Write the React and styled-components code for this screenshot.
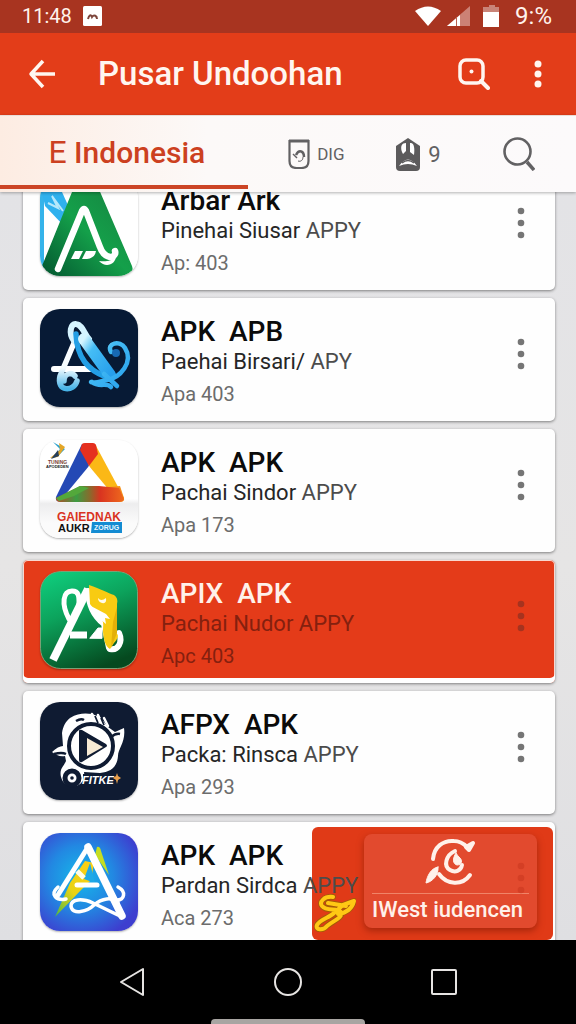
import React, { useLayoutEffect, useRef } from "react";
import styled, { createGlobalStyle } from "styled-components";

const GlobalStyle = createGlobalStyle`
  * {
    box-sizing: border-box;
  }
  body {
    margin: 0;
    font-family: Roboto, "Liberation Sans", sans-serif;
    background: #e3e2e4;
  }
  button {
    border: 0;
    padding: 0;
    background: none;
    font: inherit;
    color: inherit;
    cursor: pointer;
  }
  svg {
    display: block;
  }
`;

const Screen = styled.div`
  display: flex;
  flex-direction: column;
  height: 100vh;
`;

const StatusBar = styled.div`
  flex: none;
  display: flex;
  align-items: center;
  height: 33px;
  padding: 0 24px 2px 22px;
  background: #a83420;
  color: #fff3ec;
  font-size: 20px;
  line-height: 28px;
`;

const StatusNote = styled.div`
  flex: 1;
  padding-left: 8px;
`;

const StatusIcons = styled.div`
  display: flex;
  align-items: center;
  gap: 6px;
  padding-right: 11px;
`;

const Battery = styled.span`
  font-size: 24px;
`;

const AppBar = styled.header`
  flex: none;
  display: flex;
  align-items: center;
  height: 82px;
  padding: 0 14px 0 18px;
  background: #e33d19;
  color: #fff6f0;

  > h1 {
    flex: 1;
    margin: 0;
    padding-left: 32px;
    font-size: 33px;
    line-height: 40px;
    font-weight: 500;
    white-space: nowrap;
  }
`;

const IconButton = styled.button`
  display: flex;
  align-items: center;
  justify-content: center;
  width: 48px;
  height: 48px;
`;

const AppActions = styled.div`
  display: flex;
  gap: 16px;
`;

const TabBar = styled.nav`
  flex: none;
  position: relative;
  z-index: 2;
  display: flex;
  height: 77px;
  background: linear-gradient(90deg, #fdece2, #fcf9f8 36%, #fcfafb);
  border-top: 1px solid #e8ddd8;
  box-shadow: 0 1px 3px rgba(0, 0, 0, 0.3);
  color: #626163;
`;

const ActiveTab = styled.button`
  width: 43%;
  margin-bottom: 3px;
  padding: 4px 0 0 6px;
  border-bottom: 4px solid #cc4526;
  color: #cc4020;
  font-size: 30px;
  line-height: 36px;
  font-weight: 500;

  > span {
    font-size: 32px;
    font-weight: 400;
  }
`;

const TabGroup = styled.div`
  flex: 1;
  display: grid;
  grid-template-columns: repeat(3, 1fr);
  padding: 0 6px 0 18px;
`;

const Tab = styled.button`
  display: flex;
  align-items: center;
  justify-content: center;
  gap: 7px;
  font-size: ${(props) => (props.$large ? 22 : 17)}px;
`;

const List = styled.main`
  flex: 1;
  min-height: 0;
  display: flex;
  flex-direction: column;
  gap: 8px;
  padding: 0 21px 0 23px;
  overflow-y: auto;
  scrollbar-width: none;
  background: linear-gradient(#e3e3e6, #e6e5e5 50%, #dfdfe2);
`;

const Card = styled.article`
  flex: none;
  position: relative;
  display: flex;
  align-items: flex-start;
  height: 123px;
  padding: 11px 10px 0 17px;
  border-radius: 5px;
  background: ${(props) => (props.$active ? "#e43b19" : "#fefefe")};
  box-shadow: ${(props) =>
    props.$active
      ? "inset 0 -5px #fff, inset 0 0 0 1px #f8d8d0, 0 1px 3px rgba(0, 0, 0, 0.45)"
      : "0 1px 3px rgba(0, 0, 0, 0.45)"};
`;

const AppIcon = styled.svg`
  flex: none;
  width: 98px;
  height: 98px;
  border-radius: 20px;
  box-shadow: 0 1px 2px rgba(0, 0, 0, 0.3);
`;

const Info = styled.div`
  flex: 1;
  min-width: 0;
  position: relative;
  z-index: 1;
  padding: 7px 0 0 23px;
  white-space: pre;

  > h2 {
    margin: 0;
    font-size: 28px;
    line-height: 32px;
    font-weight: 500;
    color: ${(props) => (props.$active ? "#fff1ea" : "#0b0b0b")};
  }
`;

const Maker = styled.div`
  font-size: 22px;
  line-height: 28px;
  color: ${(props) => (props.$active ? "#84200f" : "#262626")};

  > span {
    color: ${(props) => (props.$active ? "#84200f" : "#4c4c4c")};
  }
`;

const Meta = styled.div`
  font-size: 20px;
  line-height: 36px;
  color: ${(props) => (props.$active ? "#84200f" : "#6c6c6c")};
`;

const MoreButton = styled.button`
  position: relative;
  z-index: 1;
  display: flex;
  align-items: center;
  justify-content: center;
  width: 48px;
  height: 90px;
  color: ${(props) => props.$color || "#757575"};
`;

const Promo = styled.aside`
  position: absolute;
  top: 5px;
  right: 2px;
  display: flex;
  align-items: flex-end;
  gap: 8px;
  height: 113px;
  padding: 0 16px 0 2px;
  border-radius: 6px;
  background: #e03a17;
`;

const PromoMark = styled.svg`
  width: 42px;
  height: 38px;
  margin-bottom: 8px;
`;

const PromoPanel = styled.button`
  display: flex;
  flex-direction: column;
  align-items: center;
  width: 173px;
  margin-bottom: 12px;
  padding: 2px 8px 5px;
  border-radius: 8px;
  background: #e24a2e;
  box-shadow: 0 3px 7px rgba(110, 20, 0, 0.5);
  color: #fff1ea;
`;

const PromoLabel = styled.span`
  width: 100%;
  margin-top: 6px;
  padding-top: 3px;
  border-top: 1px solid #f08468;
  font-size: 22px;
  line-height: 26px;
  font-weight: 500;
  text-align: left;
  white-space: nowrap;
`;

const NavBar = styled.footer`
  flex: none;
  display: flex;
  flex-direction: column;
  align-items: center;
  height: 84px;
  padding-top: 5px;
  background: #000;
  color: #e6e4e2;
`;

const NavButtons = styled.div`
  flex: 1;
  display: flex;
  align-items: center;
  gap: 108px;
`;

const HomePill = styled.div`
  width: 154px;
  height: 5px;
  border-radius: 4px 4px 0 0;
  background: #a8a5a2;
`;

const Dots = ({ r = 3.3, gap = 12 }) => (
  <svg width="10" height="36" viewBox="0 0 10 36" fill="currentColor">
    <circle cx="5" cy={18 - gap} r={r} />
    <circle cx="5" cy="18" r={r} />
    <circle cx="5" cy={18 + gap} r={r} />
  </svg>
);

const GreenIcon = () => (
  <AppIcon viewBox="0 0 98 98">
    <defs>
      <linearGradient id="green" x1="0" y1="1" x2="1" y2="0">
        <stop offset="0" stopColor="#03552f" />
        <stop offset="0.5" stopColor="#14a04a" />
        <stop offset="1" stopColor="#16803f" />
      </linearGradient>
    </defs>
    <rect width="98" height="98" fill="#fff" />
    <path d="M0 0h4v98H0z" fill="#35b3ea" />
    <path d="M2 14h20l9 20-7 14L5 28z" fill="#2fb1ee" />
    <path d="M8 25l10 5-6-12 11 15" fill="none" stroke="#b5e8fb" strokeWidth="2" />
    <path d="M32 14q2-6 8-6h12q6 0 9 8l31 72q3 10-7 10H8q-9 0-6-10z" fill="url(#green)" />
    <path
      d="M18 91L42 33q2-4 4 0l14 36c2 6 5 9 10 10 4 0 6-3 5-6"
      fill="none"
      stroke="#fff"
      strokeWidth="6.5"
      strokeLinecap="round"
    />
    <path d="M59 83c7 8 17 3 17-5-4 5-10 6-17 5z" fill="#fff" />
    <path d="M35 73h8l-4 8h-8zM46 73h10q-1 7-9 8h-5z" fill="#fff" />
  </AppIcon>
);

const NavyIcon = () => (
  <AppIcon viewBox="0 0 98 98">
    <defs>
      <linearGradient id="sky" x1="0" y1="0" x2="1" y2="1">
        <stop offset="0" stopColor="#d5f5ff" />
        <stop offset="0.3" stopColor="#45bdf5" />
        <stop offset="1" stopColor="#279fec" />
      </linearGradient>
      <linearGradient id="ice" x1="0" y1="0" x2="0" y2="1">
        <stop offset="0" stopColor="#fff" />
        <stop offset="0.55" stopColor="#f4fcff" />
        <stop offset="1" stopColor="#48b4e8" />
      </linearGradient>
    </defs>
    <rect width="98" height="98" fill="#071a35" />
    <g fill="none" strokeLinecap="round" strokeLinejoin="round">
      <path d="M14 60h36" stroke="#fff" strokeWidth="6" />
      <path
        d="M34 34L20 67c-4 16 14 16 17 5M24 72c0-8 8-9 11-5"
        stroke="url(#ice)"
        strokeWidth="5.5"
      />
      <path d="M34 32c-6-8-3-18 2-17 7 1 8 10 13 15" stroke="#d5f4ff" strokeWidth="6" />
      <path d="M36 25c1 24 12 36 30 43" stroke="#239fe5" strokeWidth="5.5" />
      <path d="M44 30l26 36" stroke="url(#sky)" strokeWidth="12" />
      <path
        d="M71 43c-5-9 9-12 14-4 9 14-5 30-18 32-7 1-10 4-16 2M64 65l13 12M52 73c7 6 15 0 19 5"
        stroke="url(#sky)"
        strokeWidth="4.5"
      />
      <circle cx="76" cy="44" r="2" stroke="#1769b3" strokeWidth="4" />
    </g>
  </AppIcon>
);

const PrismIcon = () => (
  <AppIcon viewBox="0 0 98 98">
    <defs>
      <linearGradient id="base" x1="0" y1="0" x2="1" y2="0">
        <stop offset="0" stopColor="#b54a28" />
        <stop offset="0.3" stopColor="#3c9c43" />
        <stop offset="0.5" stopColor="#8a6a2c" />
        <stop offset="0.65" stopColor="#d93420" />
        <stop offset="1" stopColor="#ef6a1d" />
      </linearGradient>
      <linearGradient id="paper" x1="0" y1="0" x2="0" y2="1">
        <stop offset="0.6" stopColor="#fff" />
        <stop offset="0.65" stopColor="#ededee" />
        <stop offset="0.85" stopColor="#fbfbfb" />
      </linearGradient>
    </defs>
    <rect width="98" height="98" fill="url(#paper)" />
    <path d="M42 4L16 57q-1 5 4 4l29-35z" fill="#2449b5" />
    <path d="M55 4l29 54q1 4-5 4L49 26z" fill="#fbb816" />
    <path d="M69 47l11-1 4 12-5 4-8-3z" fill="#f5901a" />
    <path d="M16 58l24-12h19l20 2 5 11q0 3-5 3H20q-4 0-4-4z" fill="url(#base)" />
    <path d="M16 58l24-12 9 2-15 8-15 5z" fill="#53a83b" />
    <path d="M42 4q1-1 3-1h8q2 0 3 2l2 9-9 12-9-16z" fill="#e5301f" />
    <path d="M49 26L39 46h20z" fill="#fff" />
    <path d="M13 2l7 7-6 8 4-1 7-7z" fill="#27a0ce" />
    <path d="M10 18l8-1 7-10-6-4 1 7z" fill="#e4a627" />
    <path d="M18 10l-7 9 8-3z" fill="#253f5c" />
    <g fontFamily="Liberation Sans, sans-serif" fontWeight="bold">
      <text x="8" y="24" fontSize="5" fill="#7a4438">TUNING</text>
      <text x="6" y="28" fontSize="4" fill="#222">APODEDEN</text>
      <text x="17" y="81" fontSize="12" fill="#d9331f">GAIEDNAK</text>
      <text x="18" y="92" fontSize="11" fill="#111">AUKR</text>
      <path d="M52 82h30v11H51z" fill="#138bd2" />
      <text x="54" y="90" fontSize="7" fill="#e8f7ff">ZORUG</text>
    </g>
  </AppIcon>
);

const EmeraldIcon = () => (
  <AppIcon viewBox="0 0 98 98">
    <defs>
      <linearGradient id="emerald" x1="0.2" y1="0" x2="0.6" y2="1">
        <stop offset="0" stopColor="#0fca7b" />
        <stop offset="0.4" stopColor="#0ca35c" />
        <stop offset="1" stopColor="#05491f" />
      </linearGradient>
    </defs>
    <rect x="0.5" y="0.5" width="97" height="97" rx="20" fill="url(#emerald)" stroke="#7ba076" />
    <g fill="none" stroke="#fff" strokeLinecap="round" strokeLinejoin="round">
      <path d="M29 48c-8-15-6-28 3-28 8 0 7 7 7 16" strokeWidth="5" />
      <path d="M13 89l35-71" strokeWidth="8" strokeLinecap="butt" />
      <path d="M30 64h17" strokeWidth="7" strokeLinecap="butt" />
      <path d="M50 67l8-10h4v10z" fill="#fff" strokeWidth="1" />
      <path d="M48 20c1 14 5 24 16 33l5 24" strokeWidth="6" />
      <path d="M79 62c4 9-1 18-9 16" strokeWidth="6" />
    </g>
    <path
      d="M49 14c12 4 19 8 25 10 3 2 4 5 3 9v15c0 6-2 9-1 14 4 2 1 7-2 10l-4 6c-5-3-6-9-7-17 0-6 1-9-1-12L50 33z"
      fill="#f8cb12"
    />
    <path d="M77 36v26l-6 15 2-26z" fill="#e3b008" />
    <path d="M49 34l17 9 4 5-5-1 1 6-10-8z" fill="#fff" />
    <path d="M58 27q3 4 8 0 1 6-4 5-4-1-4-5z" fill="#fffbe8" />
  </AppIcon>
);

const PlayIcon = () => (
  <AppIcon viewBox="0 0 98 98">
    <rect width="98" height="98" fill="#0f1b32" />
    <path
      d="M30 16c8-5 15-5 22-4l8 3 8 10 7 5 9-4c2 14-6 20-6 28-1 12-8 16-18 17l-16-1c3 16-19 20-23 5-2-8 3-11 5-16l-1-5c-5 1-9-1-13-4 4-4 8-6 11-6l-1-13c1-7 4-12 8-15z"
      fill="#fff"
    />
    <path
      d="M52 12l4 9M58 13l4 9M64 16l4 8"
      stroke="#fff"
      strokeWidth="2.5"
      strokeLinecap="round"
    />
    <path d="M55 14l3 7M61 16l3 7" stroke="#0f1b32" strokeWidth="1.8" />
    <path
      d="M36 19q5-3 8-1M14 52q8-2 12 0M71 35q5-4 9-3"
      stroke="#0f1b32"
      strokeWidth="2.5"
      fill="none"
    />
    <circle cx="51" cy="44" r="22" fill="#fff" stroke="#0f1b32" strokeWidth="4" />
    <path d="M39 29q0-2 3-1l24 14q2 2 0 3L42 60q-3 1-3-2z" fill="#0f1b32" />
    <path d="M47 36l16 9-16 9z" fill="#f6ead5" />
    <path d="M43 72h32v12H43z" fill="#0f1b32" />
    <circle cx="32" cy="76" r="7" fill="#fff" stroke="#0f1b32" strokeWidth="5" />
    <circle cx="32" cy="76" r="1.8" fill="#0f1b32" />
    <text
      x="42"
      y="82"
      fontSize="11"
      fontStyle="italic"
      fontWeight="bold"
      fontFamily="Liberation Sans, sans-serif"
      fill="#fff"
    >
      FITKE
    </text>
    <path d="M77 71l1 3 3 2-3 2-1 4-1-4-3-2 3-2z" fill="#e9a04d" />
  </AppIcon>
);

const OrbitIcon = () => (
  <AppIcon viewBox="0 0 98 98">
    <defs>
      <radialGradient id="orbit" cx="0.42" cy="0.45" r="0.65">
        <stop offset="0" stopColor="#16b9ea" />
        <stop offset="0.5" stopColor="#2288e2" />
        <stop offset="1" stopColor="#3d3ecf" />
      </radialGradient>
      <linearGradient id="lime" x1="1" y1="0" x2="0" y2="1">
        <stop offset="0" stopColor="#ffce12" />
        <stop offset="0.55" stopColor="#e9d314" />
        <stop offset="1" stopColor="#48b847" />
      </linearGradient>
    </defs>
    <rect width="98" height="98" fill="url(#orbit)" />
    <path d="M57 14q3-1 4 4l8 24-14-20z" fill="#c5dd22" />
    <path d="M45 28L30 50 15 84l27-28 9-9 3-17z" fill="url(#lime)" />
    <path d="M44 46l6-16 5 20z" fill="#1fa9e6" />
    <g fill="none" stroke="#fff" strokeLinecap="round" strokeLinejoin="round">
      <path d="M37 52h20" strokeWidth="5" />
      <path d="M48 14L18 62" strokeWidth="5" />
      <path d="M48 14l34 69" strokeWidth="7.5" />
      <path d="M18 54c-9 8-1 14 8 12" strokeWidth="3.5" />
      <path d="M78 54c9 5 6 13-1 13" strokeWidth="3.5" />
      <path d="M82 84L53 70c-11-5-22-4-22 3 1 10 17 5 23-1 8-7 18-8 24-3" strokeWidth="3.5" />
    </g>
    <path d="M37 38l7 7" stroke="#fffce5" strokeWidth="5" />
  </AppIcon>
);

const apps = [
  { Icon: GreenIcon, name: "Arbar Ark", maker: "Pinehai Siusar ", suffix: "APPY", meta: "Ap: 403" },
  { Icon: NavyIcon, name: "APK  APB", maker: "Paehai Birsari/ ", suffix: "APY", meta: "Apa 403" },
  { Icon: PrismIcon, name: "APK  APK", maker: "Pachai Sindor ", suffix: "APPY", meta: "Apa 173" },
  { Icon: EmeraldIcon, name: "APIX  APK", maker: "Pachai Nudor ", suffix: "APPY", meta: "Apc 403", active: true },
  { Icon: PlayIcon, name: "AFPX  APK", maker: "Packa: Rinsca ", suffix: "APPY", meta: "Apa 293" },
  { Icon: OrbitIcon, name: "APK  APK", maker: "Pardan Sirdca ", suffix: "APPY", meta: "Aca 273", promo: true },
];

const PromoBanner = () => (
  <Promo>
    <PromoMark viewBox="0 0 42 38" fill="none" strokeLinecap="round" strokeLinejoin="round">
      <path
        d="M19 3C10 2 5 8 8 12c5 6 15 1 19 6 2 6-7 8-14 14-4 5-12 4-10-1 3-6 12-7 17-12l9-8 11-4c-2 8-8 12-16 13M14 9l18 3"
        stroke="#a65a08"
        strokeWidth="6"
      />
      <path
        d="M19 3C10 2 5 8 8 12c5 6 15 1 19 6 2 6-7 8-14 14-4 5-12 4-10-1 3-6 12-7 17-12l9-8 11-4c-2 8-8 12-16 13M14 9l18 3"
        stroke="#ffc814"
        strokeWidth="4"
      />
    </PromoMark>
    <PromoPanel>
      <svg width="52" height="51" viewBox="0 0 52 51" fill="none" stroke="currentColor" strokeLinecap="round">
        <path d="M8 23C9 11 18 4 29 5c6 0 10 3 13 6" strokeWidth="4" />
        <path d="M41 11l7-4-4 7z" strokeWidth="4" fill="currentColor" strokeLinejoin="round" />
        <path d="M14 38c8 11 23 12 31 1" strokeWidth="4" />
        <path d="M13 31c-7 1-11 9-12 16 6-1 13-8 12-16z" fill="currentColor" strokeWidth="1" />
        <path d="M30 15c-9 4-12 15-5 19 5 3 11 1 12-5" strokeWidth="4" />
        <path d="M31 17c-4 6-3 11 1 12 5 0 6-5 2-8-2-2-3-4-3-4z" fill="currentColor" strokeWidth="1" />
      </svg>
      <PromoLabel>IWest iudencen</PromoLabel>
    </PromoPanel>
  </Promo>
);

const AppCard = ({ app }) => {
  const { Icon, name, maker, suffix, meta, active, promo } = app;
  let dotColor = active ? "#a5331f" : undefined;
  if (promo) dotColor = "#d43f25";

  return (
    <Card $active={active}>
      {promo && <PromoBanner />}
      <Icon />
      <Info $active={active}>
        <h2>{name}</h2>
        <Maker $active={active}>
          {maker}
          <span>{suffix}</span>
        </Maker>
        <Meta $active={active}>{meta}</Meta>
      </Info>
      <MoreButton $color={dotColor} aria-label="More">
        <Dots />
      </MoreButton>
    </Card>
  );
};

const App = () => {
  const listRef = useRef(null);

  useLayoutEffect(() => {
    listRef.current.scrollTop = 25;
  }, []);

  return (
    <Screen>
      <GlobalStyle />
      <StatusBar>
        <span>11:48</span>
        <StatusNote>
          <svg width="24" height="20" viewBox="0 0 24 20">
            <rect x="3" width="19" height="20" rx="1.5" fill="#fff" />
            <path d="M8 13c1-4 3-5 4-2 2-3 5-1 5 2" fill="none" stroke="#7d463c" strokeWidth="2" />
          </svg>
        </StatusNote>
        <StatusIcons>
          <svg width="26" height="20" viewBox="0 0 26 20">
            <path d="M0 5Q13-4 26 5L13 20z" fill="#fff" />
          </svg>
          <svg width="23" height="20" viewBox="0 0 23 20">
            <path d="M0 20L23 0v20z" fill="#cc8175" />
            <path d="M0 20L13 9v11z" fill="#fff" />
            <path d="M9.5 11v9" stroke="#b96150" strokeWidth="1" />
          </svg>
          <svg width="28" height="22" viewBox="0 0 28 22">
            <path d="M10 2h3V0h6v2h4v6H7V2z" fill="#c98478" />
            <path d="M7 7h16v15H7z" fill="#fff" />
          </svg>
        </StatusIcons>
        <Battery>9:%</Battery>
      </StatusBar>

      <AppBar>
        <IconButton aria-label="Back">
          <svg width="28" height="30" viewBox="0 0 28 30" fill="none" stroke="currentColor" strokeWidth="3.5">
            <path d="M15 2L3 15l12 13M3 15h24" strokeLinejoin="round" />
          </svg>
        </IconButton>
        <h1>Pusar Undoohan</h1>
        <AppActions>
          <IconButton aria-label="Search apps">
            <svg width="32" height="32" viewBox="0 0 32 32" fill="none" stroke="currentColor">
              <rect x="2" y="2" width="23" height="23" rx="6" strokeWidth="3.5" />
              <path d="M23 23l7 7" strokeWidth="4" strokeLinecap="round" />
              <circle cx="13.5" cy="13.5" r="2" fill="currentColor" stroke="none" />
            </svg>
          </IconButton>
          <IconButton aria-label="Menu">
            <Dots r={3.5} gap={10} />
          </IconButton>
        </AppActions>
      </AppBar>

      <TabBar>
        <ActiveTab>
          <span>E</span> Indonesia
        </ActiveTab>
        <TabGroup>
          <Tab>
            <svg width="22" height="30" viewBox="0 0 22 30" fill="none" stroke="currentColor">
              <path d="M1.5 2v20q0 7 7 7h5q7 0 7-7V2z" strokeWidth="2.2" />
              <path d="M1 2h20" strokeWidth="3" />
              <path d="M5 15l4 4" strokeWidth="1.5" />
              <path d="M8 16c3-6 8-4 8 2" strokeWidth="2.5" />
              <path d="M15 18c0 3-2 5-5 4" strokeWidth="1" />
            </svg>
            DIG
          </Tab>
          <Tab $large>
            <svg width="26" height="33" viewBox="0 0 26 33">
              <path d="M1 8l6-4 6-4 6 4 6 4v21q0 4-4 4H5q-4 0-4-4z" fill="#5c5b5c" />
              <path d="M7 14c-2-6 0-9 4-9v8l-3 3zM15 5c4-1 5 5 4 12l-4-3z" fill="#fff" />
              <path d="M4 28q9-13 18 0-9-4-18 0z" fill="#fff" />
              <path d="M7 25q6-5 12 0" stroke="#5c5b5c" strokeWidth="1.5" fill="none" />
            </svg>
            9
          </Tab>
          <Tab aria-label="Search">
            <svg width="32" height="34" viewBox="0 0 32 34" fill="none" stroke="currentColor">
              <circle cx="14.5" cy="14.5" r="13" strokeWidth="2.6" />
              <path d="M24 25l7 8" strokeWidth="3.5" />
            </svg>
          </Tab>
        </TabGroup>
      </TabBar>

      <List ref={listRef}>
        {apps.map((app, i) => (
          <AppCard key={i} app={app} />
        ))}
      </List>

      <NavBar>
        <NavButtons>
          <IconButton aria-label="Back">
            <svg width="26" height="30" viewBox="0 0 26 30" fill="none" stroke="currentColor" strokeWidth="2">
              <path d="M24 2v26L2 15z" strokeLinejoin="round" />
            </svg>
          </IconButton>
          <IconButton aria-label="Home">
            <svg width="28" height="28" viewBox="0 0 28 28" fill="none" stroke="currentColor" strokeWidth="2">
              <circle cx="14" cy="14" r="13" />
            </svg>
          </IconButton>
          <IconButton aria-label="Recent apps">
            <svg width="26" height="26" viewBox="0 0 26 26" fill="none" stroke="currentColor" strokeWidth="2">
              <rect x="1" y="1" width="24" height="24" rx="1" />
            </svg>
          </IconButton>
        </NavButtons>
        <HomePill />
      </NavBar>
    </Screen>
  );
};

export default App;
